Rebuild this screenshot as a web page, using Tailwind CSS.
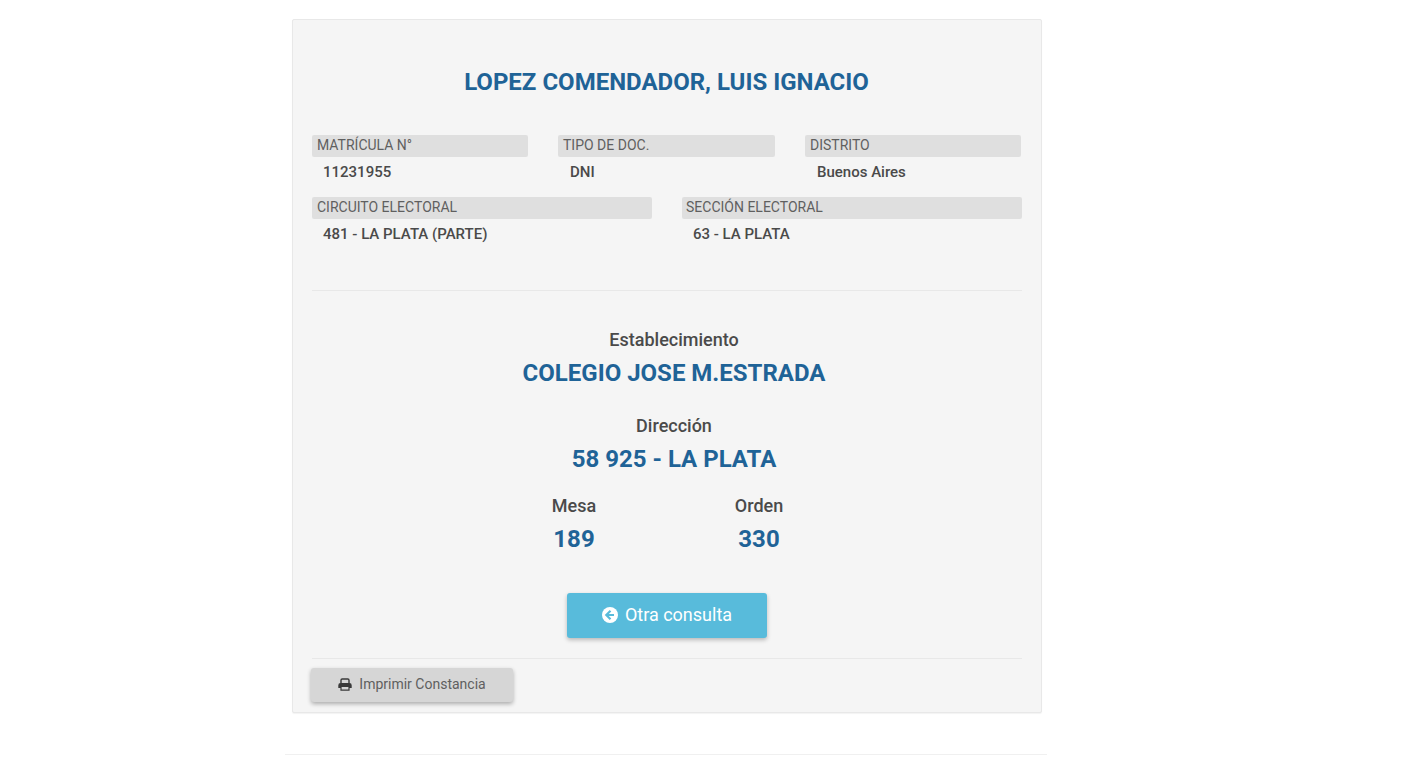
<!DOCTYPE html>
<html lang="en">
<head>
    <meta charset="UTF-8">
    <title>Consulta de padrón</title>
    <script src="https://cdn.jsdelivr.net/npm/@tailwindcss/browser@4"></script>
</head>
<body class="bg-white font-['Roboto',sans-serif] text-[#4a4a4a] overflow-hidden">
    <div class="w-[1406px] h-[771px] pt-[19px] pl-[285px]">
        <div class="w-[762px] h-[736px] border-b border-[#f0f0f0]">
            <div class="ml-[7px] w-[750px] h-[694px] bg-[#f5f5f5] border border-[#e8e8e8] rounded-[2px] shadow-[0_1px_1px_rgba(0,0,0,0.05)] px-[19px]">
                <h1 class="pt-[46px] pr-[1px] h-[115px] text-center text-[24px] leading-[32px] font-bold text-[#1f6397]">LOPEZ COMENDADOR, LUIS IGNACIO</h1>

                <div class="flex gap-[30px]">
                    <div class="w-[216px]">
                        <div class="h-[22px] pl-[5px] bg-[#dfdfdf] rounded-[2px] text-[14px] leading-[20px] text-[#5f5f5f]">MATRÍCULA N°</div>
                        <div class="pl-[11px] pt-[5px] h-[40px] text-[15px] leading-[20px] font-medium">11231955</div>
                    </div>
                    <div class="w-[217px]">
                        <div class="h-[22px] pl-[5px] bg-[#dfdfdf] rounded-[2px] text-[14px] leading-[20px] text-[#5f5f5f]">TIPO DE DOC.</div>
                        <div class="pl-[12px] pt-[5px] h-[40px] text-[15px] leading-[20px] font-medium">DNI</div>
                    </div>
                    <div class="w-[216px]">
                        <div class="h-[22px] pl-[5px] bg-[#dfdfdf] rounded-[2px] text-[14px] leading-[20px] text-[#5f5f5f]">DISTRITO</div>
                        <div class="pl-[12px] pt-[5px] h-[40px] text-[15px] leading-[20px] font-medium">Buenos Aires</div>
                    </div>
                </div>

                <div class="flex gap-[30px]">
                    <div class="w-[340px]">
                        <div class="h-[22px] pl-[5px] bg-[#dfdfdf] rounded-[2px] text-[14px] leading-[20px] text-[#5f5f5f]">CIRCUITO ELECTORAL</div>
                        <div class="pl-[11px] pt-[5px] h-[71px] text-[15px] leading-[20px] font-medium">481 - LA PLATA (PARTE)</div>
                    </div>
                    <div class="w-[340px]">
                        <div class="h-[22px] pl-[4px] bg-[#dfdfdf] rounded-[2px] text-[14px] leading-[20px] text-[#5f5f5f]">SECCIÓN ELECTORAL</div>
                        <div class="pl-[11px] pt-[5px] h-[71px] text-[15px] leading-[20px] font-medium">63 - LA PLATA</div>
                    </div>
                </div>

                <div class="border-t border-[#e8e8e8] pt-[37px] pl-[14px] text-center">
                    <div class="text-[18px] leading-[24px] font-medium">Establecimiento</div>
                    <div class="mt-[5px] text-[24px] leading-[32px] font-bold text-[#1f6397]">COLEGIO JOSE M.ESTRADA</div>
                    <div class="mt-[25px] text-[18px] leading-[24px] font-medium">Dirección</div>
                    <div class="mt-[5px] text-[24px] leading-[32px] font-bold text-[#1f6397]">58 925 - LA PLATA</div>
                </div>

                <div class="flex pt-[19px] pl-[221px]">
                    <div class="w-[82px] text-center">
                        <div class="text-[18px] leading-[24px] font-medium">Mesa</div>
                        <div class="mt-[5px] text-[24px] leading-[32px] font-bold text-[#1f6397]">189</div>
                    </div>
                    <div class="ml-[103px] w-[82px] text-center">
                        <div class="text-[18px] leading-[24px] font-medium">Orden</div>
                        <div class="mt-[5px] text-[24px] leading-[32px] font-bold text-[#1f6397]">330</div>
                    </div>
                </div>

                <div class="flex justify-center pt-[38px] pb-[20px] border-b border-[#e8e8e8]">
                    <button class="flex items-center justify-center gap-[7px] w-[200px] h-[45px] pb-[2px] bg-[#58bbdb] rounded-[3px] shadow-[0_2px_4px_rgba(0,0,0,0.25)] text-white text-[18px]">
                        <svg class="w-[16px] h-[16px]" viewBox="0 0 16 16"><circle cx="8" cy="8" r="8" fill="#fff"/><path d="M8.5 3.8 4.3 8l4.2 4.2M4.8 8H12" fill="none" stroke="#58bbdb" stroke-width="2.2"/></svg>
                        Otra consulta
                    </button>
                </div>

                <button class="mt-[9px] -ml-px flex items-center justify-center gap-[7px] w-[202px] h-[34px] pb-[2px] bg-[#d6d6d6] rounded-[3px] shadow-[0_2px_4px_rgba(0,0,0,0.3)] text-[14px] text-[#5f5f5f]">
                    <svg class="w-[14px] h-[13px]" viewBox="0 0 14 13"><path d="M3 5V2.2A1.2 1.2 0 0 1 4.2 1h5.6A1.2 1.2 0 0 1 11 2.2V5" fill="none" stroke="#3a3a3a" stroke-width="1.4"/><path d="M2.5 5h9A2.2 2.2 0 0 1 13.7 7.2V10H.3V7.2A2.2 2.2 0 0 1 2.5 5Z" fill="#3a3a3a"/><path d="M3 8.5h8v3.7H3Z" fill="#d6d6d6" stroke="#3a3a3a" stroke-width="1.2"/></svg>
                    Imprimir Constancia
                </button>
            </div>
        </div>
    </div>
</body>
</html>
